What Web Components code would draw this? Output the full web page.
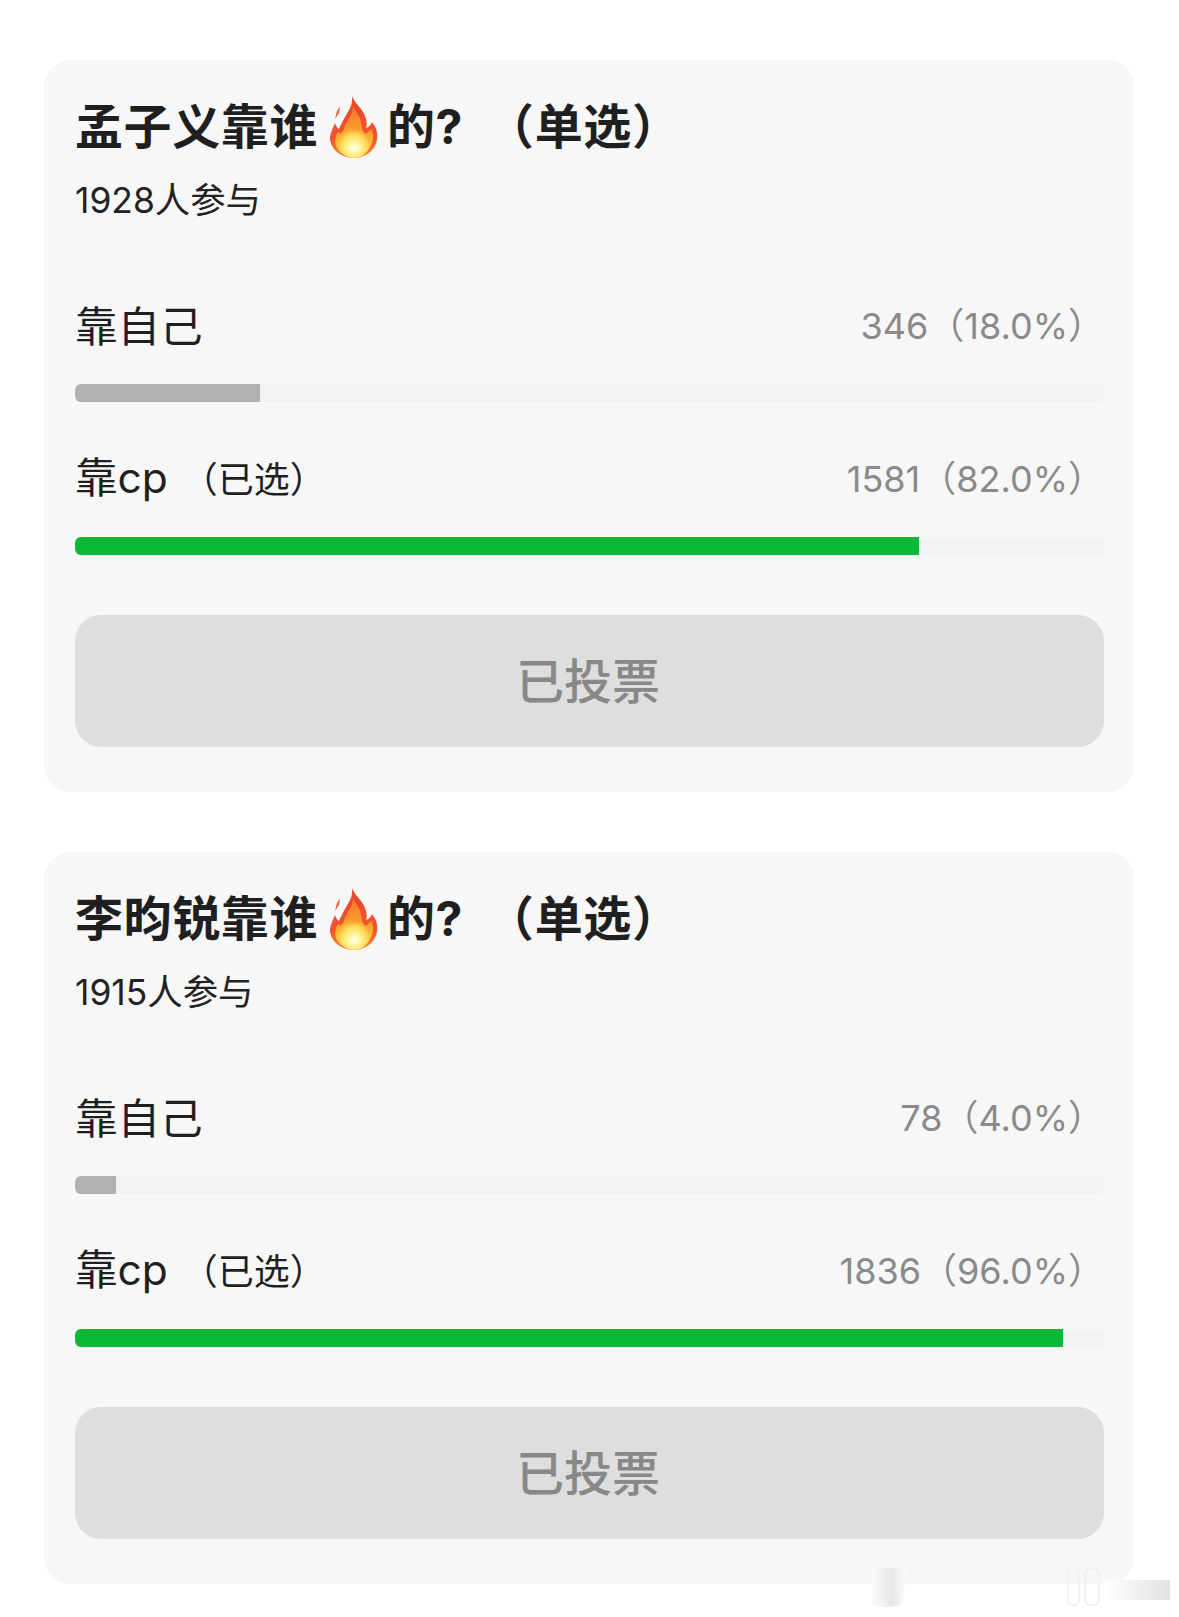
<!DOCTYPE html>
<html lang="zh">
<head>
<meta charset="utf-8">
<title>投票</title>
<style>
  html, body { margin: 0; background: #fff; }
  body {
    width: 1179px;
    height: 1617px;
    overflow: hidden;
    font-family: Inter, "Noto Sans CJK SC", sans-serif;
  }
</style>
</head>
<body>
<poll-page>
  <poll-card total="1928人参与">
    <span slot="title">孟子义靠谁</span>
    <span slot="after">的?</span>
    <poll-option label="靠自己" count="346（18.0%）" percent="18"></poll-option>
    <poll-option label="靠cp" note="（已选）" count="1581（82.0%）" percent="82" selected></poll-option>
  </poll-card>
  <poll-card total="1915人参与">
    <span slot="title">李昀锐靠谁</span>
    <span slot="after">的?</span>
    <poll-option label="靠自己" count="78（4.0%）" percent="4"></poll-option>
    <poll-option label="靠cp" note="（已选）" count="1836（96.0%）" percent="96" selected></poll-option>
  </poll-card>
</poll-page>
<script>
class PollPage extends HTMLElement {
  connectedCallback() {
    this.attachShadow({ mode: 'open' });
    this.shadowRoot.innerHTML = `
      <style>
        :host {
          display: flex;
          flex-direction: column;
          gap: 60px;
          padding: 60px 45px 0 44px;
          position: relative;
          height: 1557px;
        }
        svg { position: absolute; left: 860px; top: 1560px; }
      </style>
      <slot></slot>
      <svg width="319" height="50" viewBox="0 0 319 50">
        <defs>
          <linearGradient id="wm" x1="0" x2="1" y1="0" y2="0">
            <stop offset="0" stop-color="#fff"/>
            <stop offset="1" stop-color="#e2e2e2"/>
          </linearGradient>
          <linearGradient id="pin" x1="0" x2="1" y1="0" y2="0">
            <stop offset="0" stop-color="#fcfcfc"/>
            <stop offset=".6" stop-color="#e6e6e6"/>
            <stop offset="1" stop-color="#fcfcfc"/>
          </linearGradient>
        </defs>
        <rect x="243" y="20" width="67" height="20" fill="url(#wm)"/>
        <path d="M12 44V8h34l-3 36q-15 6-31 0Z" fill="url(#pin)"/>
        <rect x="208" y="8" width="11" height="37" rx="5" fill="none" stroke="#f1f1f1" stroke-width="2"/>
        <rect x="225" y="8" width="14" height="37" rx="6" fill="none" stroke="#f1f1f1" stroke-width="2"/>
      </svg>
    `;
  }
}

class FireEmoji extends HTMLElement {
  connectedCallback() {
    this.attachShadow({ mode: 'open' });
    this.shadowRoot.innerHTML = `
      <style>
        :host { display: inline-flex; flex: none; width: 48px; height: 62px; margin: 8px -1px 0 2px; }
      </style>
      <svg width="48" height="62" viewBox="0 0 48 62">
        <defs>
          <linearGradient id="outer" x1="0" x2="0" y1="0" y2="1">
            <stop offset="0" stop-color="#e8432c"/>
            <stop offset=".7" stop-color="#f2572b"/>
            <stop offset="1" stop-color="#f78a2e"/>
          </linearGradient>
          <linearGradient id="inner" x1="0" x2="0" y1="0" y2="1">
            <stop offset="0" stop-color="#f6762c"/>
            <stop offset=".55" stop-color="#fca22f"/>
            <stop offset="1" stop-color="#ffd84a"/>
          </linearGradient>
          <radialGradient id="core" cx=".5" cy=".72" r=".55">
            <stop offset="0" stop-color="#fffff0"/>
            <stop offset=".3" stop-color="#fff59a"/>
            <stop offset=".7" stop-color="#ffd955"/>
            <stop offset="1" stop-color="#ffc23e" stop-opacity="0"/>
          </radialGradient>
        </defs>
        <path d="M22 0C25 8 32 12 35 20C37 25 37 29 36 32C39 31 41 29 42 26C46 31 48 36 47 43C46 54 35 62 24 62C12 62 1 54 0 43C0 37 3 32 5 27C6 30 7 32 9 33C11 28 13 25 15 21C19 14 23 9 22 0Z" fill="url(#outer)"/>
        <path d="M23 10C25 16 30 19 31 26C32 31 32 35 35 38C38 36 40 35 41 33C44 38 44 44 41 49C38 56 31 61 24 61C15 61 6 55 5 46C5 42 6 39 8 36C10 38 12 37 14 33C15 28 18 25 20 21C22 17 23 14 23 10Z" fill="url(#inner)"/>
        <ellipse cx="24" cy="44" rx="17" ry="18" fill="url(#core)"/>
        <path d="M7 15l3-5-1 7-4 6Z" fill="#f2613a"/>
      </svg>
    `;
  }
}

class PollOption extends HTMLElement {
  connectedCallback() {
    const percent = this.getAttribute('percent');
    const color = this.hasAttribute('selected') ? '#08b837' : '#b1b1b1';
    const note = this.getAttribute('note');
    this.attachShadow({ mode: 'open' });
    this.shadowRoot.innerHTML = `
      <style>
        :host { display: block; }
        .row {
          display: flex;
          justify-content: space-between;
          align-items: center;
          height: 54px;
          margin-bottom: 34px;
        }
        .label { font-size: 42.5px; color: #1f1f1f; }
        .label.noted { margin-bottom: 4px; }
        .note { font-size: 36px; margin-left: 14px; }
        .count { font-size: 36px; color: #8a8a8a; font-weight: 400; }
        .track {
          height: 18px;
          background: #f2f2f2;
          border-radius: 6px;
          overflow: hidden;
        }
        .fill { height: 100%; width: ${percent}%; background: ${color}; }
      </style>
      <div class="row">
        <span class="label ${note ? 'noted' : ''}">${this.getAttribute('label')}${note ? `<span class="note">${note}</span>` : ''}</span>
        <span class="count">${this.getAttribute('count')}</span>
      </div>
      <div class="track"><div class="fill"></div></div>
    `;
  }
}

class VoteButton extends HTMLElement {
  connectedCallback() {
    this.attachShadow({ mode: 'open' });
    this.shadowRoot.innerHTML = `
      <style>
        :host {
          display: flex;
          box-sizing: border-box;
          align-items: center;
          justify-content: center;
          height: 132px;
          padding: 0 3px 6px 0;
          background: #dedede;
          border-radius: 26px;
          color: #888;
          font-size: 48px;
          font-weight: 500;
        }
      </style>
      <slot></slot>
    `;
  }
}

class PollCard extends HTMLElement {
  connectedCallback() {
    this.attachShadow({ mode: 'open' });
    this.shadowRoot.innerHTML = `
      <style>
        :host {
          display: block;
          box-sizing: border-box;
          height: 732px;
          background: #f7f7f7;
          border-radius: 26px;
          padding: 30px 30px 0 31px;
        }
        .title {
          display: flex;
          align-items: center;
          gap: 10px;
          height: 66px;
          font-size: 48px;
          font-weight: 700;
          color: #1f1f1f;
          letter-spacing: .6px;
        }
        .pick { margin-left: 23px; }
        .total {
          font-size: 35.4px;
          line-height: 40px;
          color: #222;
          margin-top: 25px;
          margin-bottom: 75px;
        }
        .options { display: flex; flex-direction: column; gap: 47px; }
        .button { margin-top: 60px; }
      </style>
      <div class="title">
        <slot name="title"></slot>
        <fire-emoji></fire-emoji>
        <span><slot name="after"></slot><span class="pick">（单选）</span></span>
      </div>
      <div class="total">${this.getAttribute('total')}</div>
      <div class="options"><slot></slot></div>
      <vote-button class="button">已投票</vote-button>
    `;
  }
}

customElements.define('poll-page', PollPage);
customElements.define('fire-emoji', FireEmoji);
customElements.define('poll-option', PollOption);
customElements.define('vote-button', VoteButton);
customElements.define('poll-card', PollCard);
</script>
</body>
</html>
